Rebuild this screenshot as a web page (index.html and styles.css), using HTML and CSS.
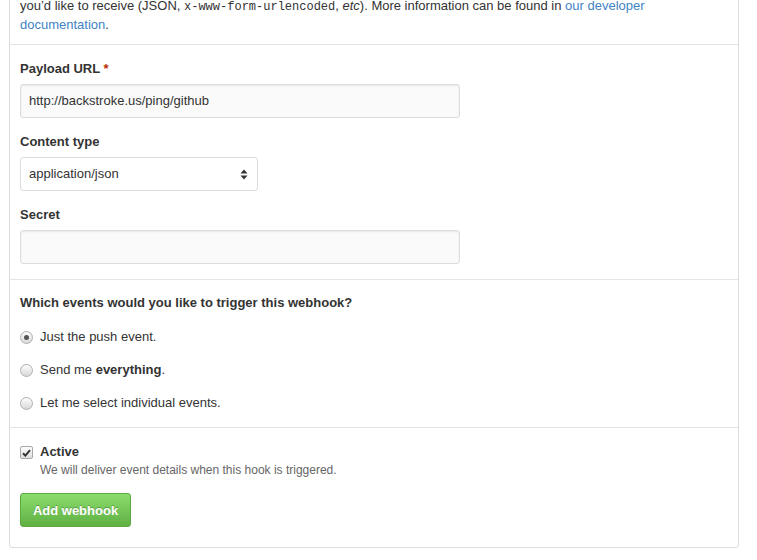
FILE: index.html
```html
<!DOCTYPE html>
<html>
<head>
<meta charset="utf-8">
<link rel="stylesheet" href="styles.css">
</head>
<body>
<div class="box">
  <div class="section intro">
    <p>you’d like to receive (JSON, <code>x-www-form-urlencoded</code>, <em>etc</em>). More information can be found in <a href="#">our developer documentation</a>.</p>
  </div>
  <div class="section fields">
    <div class="group">
      <label class="lbl">Payload URL <span class="req">*</span></label>
      <div class="input wide">http://backstroke.us/ping/github</div>
    </div>
    <div class="group">
      <label class="lbl">Content type</label>
      <div class="input select">
        <span>application/json</span>
        <svg class="caret" width="8" height="11" viewBox="0 0 8 11"><path d="M4 0.5 L7.5 4.5 H0.5 Z M4 10.5 L7.5 6.5 H0.5 Z" fill="#333"/></svg>
      </div>
    </div>
    <div class="group">
      <label class="lbl">Secret</label>
      <div class="input wide"></div>
    </div>
  </div>
  <div class="section events">
    <h4 class="lbl">Which events would you like to trigger this webhook?</h4>
    <div class="choice"><span class="radio checked"></span><span>Just the push event.</span></div>
    <div class="choice"><span class="radio"></span><span>Send me <strong>everything</strong>.</span></div>
    <div class="choice"><span class="radio"></span><span>Let me select individual events.</span></div>
  </div>
  <div class="section active">
    <div class="check-row">
      <span class="checkbox">
        <svg width="9" height="8" viewBox="0 0 9 8"><path d="M1 4.2 L3.4 6.6 L8 1.2" fill="none" stroke="#333" stroke-width="2"/></svg>
      </span>
      <div class="check-text">
        <div class="check-title">Active</div>
        <div class="note">We will deliver event details when this hook is triggered.</div>
      </div>
    </div>
    <button class="btn">Add webhook</button>
  </div>
</div>
</body>
</html>
```
FILE: styles.css
```css
html, body {
  margin: 0;
  padding: 0;
  background: #fff;
}
body {
  font-family: "Liberation Sans", Arial, sans-serif;
  font-size: 13px;
  line-height: 18px;
  color: #333;
}
.box {
  margin: -14px 0 0 9px;
  width: 728px;
  border: 1px solid #ddd;
  border-radius: 3px;
}
.section {
  padding: 10px 10px;
  border-top: 1px solid #e5e5e5;
}
.section:first-child {
  border-top: 0;
}
.intro p {
  margin: 0;
}
code {
  font-family: "Liberation Mono", monospace;
  font-size: 12px;
}
a {
  color: #4183c4;
  text-decoration: none;
}
.fields {
  padding-top: 15px;
  padding-bottom: 15px;
}
.group + .group {
  margin-top: 15px;
}
.lbl {
  display: block;
  font-weight: bold;
  margin: 0 0 6px;
  font-size: 13px;
  line-height: 18px;
}
.req {
  color: #bd2c00;
}
.input {
  box-sizing: border-box;
  height: 34px;
  padding: 7px 8px;
  border: 1px solid #ddd;
  border-radius: 3px;
  background: #fafafa;
  box-shadow: inset 0 1px 2px rgba(0,0,0,0.075);
  color: #333;
}
.wide {
  width: 440px;
}
.select {
  width: 238px;
  background: #fff;
  box-shadow: none;
  display: flex;
  align-items: center;
  justify-content: space-between;
  padding-right: 9px;
}
.caret {
  display: block;
}
.events {
  padding-top: 14px;
  padding-bottom: 15px;
}
.events .lbl {
  margin-bottom: 16px;
}
.choice {
  display: flex;
  align-items: center;
  gap: 7px;
}
.choice + .choice {
  margin-top: 15px;
}
.radio {
  box-sizing: border-box;
  width: 13px;
  height: 13px;
  border-radius: 50%;
  border: 1px solid #b0b0b0;
  background: linear-gradient(#fdfdfd, #d8d8d8);
  display: flex;
  align-items: center;
  justify-content: center;
}
.radio.checked::after {
  content: "";
  width: 5px;
  height: 5px;
  border-radius: 50%;
  background: #555;
}
.active {
  padding-top: 15px;
  padding-bottom: 20px;
}
.check-row {
  display: flex;
  gap: 7px;
}
.checkbox {
  box-sizing: border-box;
  margin-top: 3px;
  width: 13px;
  height: 13px;
  border: 1px solid #a8a8a8;
  border-radius: 2px;
  background: linear-gradient(#fcfcfc, #dedede);
  display: flex;
  align-items: center;
  justify-content: center;
}
.check-title {
  font-weight: bold;
}
.note {
  font-size: 12px;
  line-height: 16px;
  color: #666;
  margin-top: 1px;
}
.btn {
  margin-top: 15px;
  box-sizing: border-box;
  height: 34px;
  width: 111px;
  padding: 0;
  font-family: "Liberation Sans", Arial, sans-serif;
  font-size: 13px;
  font-weight: bold;
  color: #fff;
  text-shadow: 0 -1px 0 rgba(0,0,0,0.25);
  background: linear-gradient(#8add6d, #60b044);
  border: 1px solid #5ca941;
  border-radius: 3px;
  display: block;
}
```
